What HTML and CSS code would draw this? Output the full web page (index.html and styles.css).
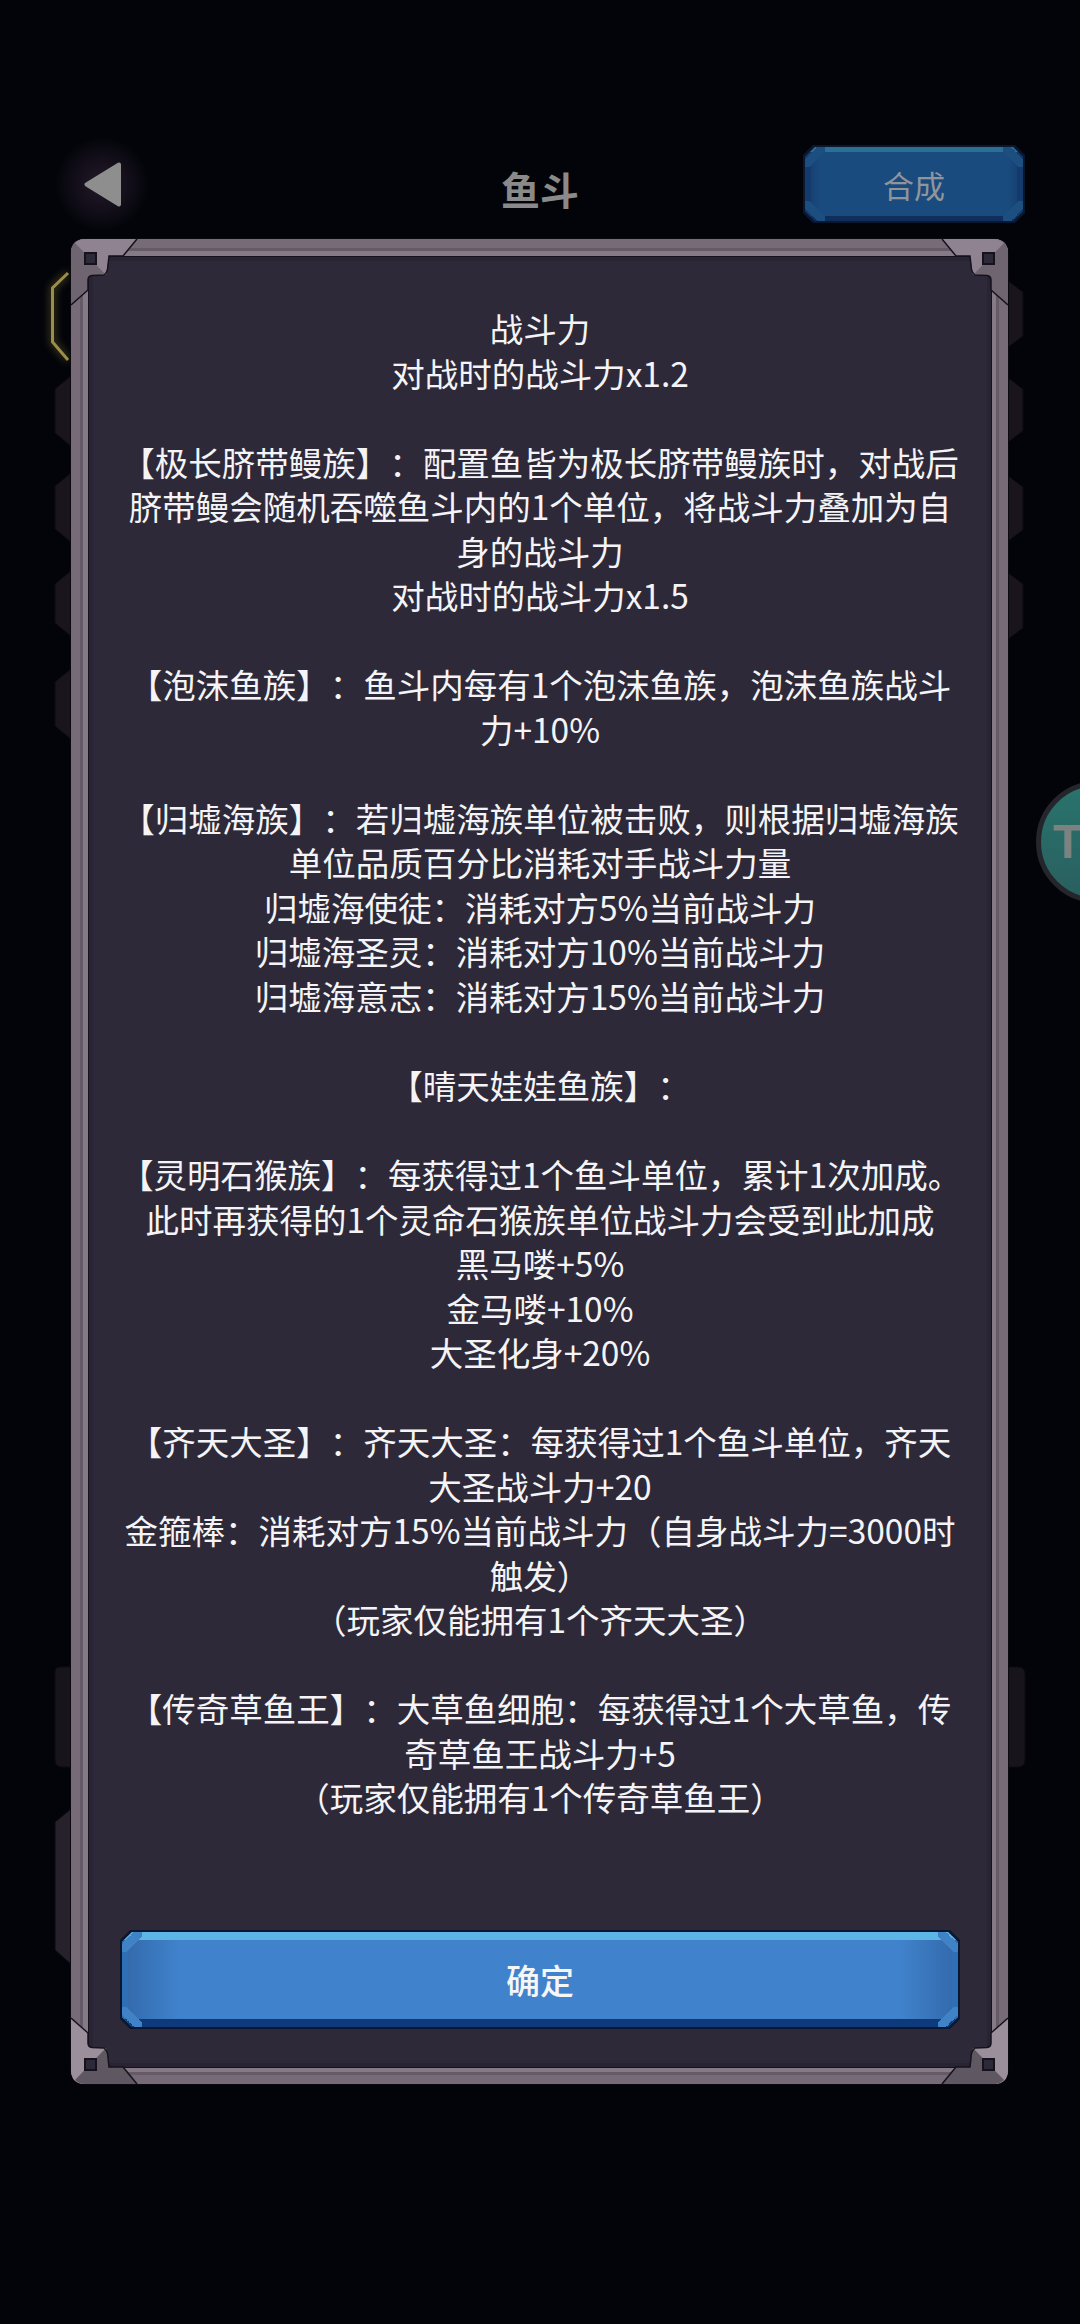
FILE: index.html
```html
<!DOCTYPE html>
<html lang="zh-CN">
<head>
    <meta charset="UTF-8">
    <meta name="viewport" content="width=device-width, initial-scale=1.0">
    <title>鱼斗</title>
    <link rel="stylesheet" href="styles.css">
</head>
<body>
<div class="page">

    <!-- tabs of the screen behind the dialog -->
    <svg class="sideTabs" viewBox="0 0 1080 2324" aria-hidden="true">
        <path class="tab" d="M72 375 L55 389 V433 L72 447 Z"/>
        <path class="tab" d="M72 472 L55 486 V529 L72 543 Z"/>
        <path class="tab" d="M72 570 L55 584 V623 L72 637 Z"/>
        <path class="tab" d="M72 668 L55 682 V726 L72 740 Z"/>
        <path class="tab" d="M1007 280 L1023 292 V336 L1007 348 Z"/>
        <path class="tab" d="M1007 377 L1023 389 V431 L1007 443 Z"/>
        <path class="tab" d="M1007 475 L1023 487 V530 L1007 542 Z"/>
        <path class="tab" d="M1007 572 L1023 584 V628 L1007 640 Z"/>
        <path class="tab tabDim" d="M72 1667 H60 Q55 1667 55 1672 V1760 Q55 1767 62 1767 H72 Z"/>
        <path class="tab tabDim" d="M1007 1667 H1018 Q1025 1667 1025 1674 V1760 Q1025 1767 1018 1767 H1007 Z"/>
        <path class="tab tabLit" d="M72 1808 L55 1822 V1950 L72 1965 Z"/>
        <path class="tabGold" d="M68 273 L52.5 288 V342 L68 360"/>
    </svg>

    <div class="sideBadge">To</div>

    <header class="topBar">
        <div class="backBtn">
            <svg class="backIcon" viewBox="0 0 37 45" aria-hidden="true">
                <path d="M35 2.500 L2.500 22.500 L35 42.500 Z"/>
            </svg>
        </div>
        <h1 class="title">鱼斗</h1>
        <div class="bevel bevelDim">
            <span class="bevelLabel">合成</span>
        </div>
    </header>

    <section class="frame">
        <svg class="corner cornerTL" viewBox="0 0 70 70" aria-hidden="true">
            <path class="plateB" d="M14 0 L66 0 L52 17 L38 17 L35 36 L20 36.500 Q17 37 17 41 V51 L0 66 V14 Q0 0 14 0 Z"/>
            <path class="plateA" d="M14 0 L66 0 L52 17 L38 17 L35 36 L4 4 Q8 0 14 0 Z"/>
            <path class="plateLine" d="M66 0 L52 17 L38 17 L37 26 Q37 33 33 36 L21 36.500 Q17 37 17 41 V51 L0 66"/>
            <rect class="plateHole" x="14" y="14" width="11" height="11"/>
        </svg>
        <svg class="corner cornerTR" viewBox="0 0 70 70" aria-hidden="true">
            <path class="plateB" d="M14 0 L66 0 L52 17 L38 17 L35 36 L20 36.500 Q17 37 17 41 V51 L0 66 V14 Q0 0 14 0 Z"/>
            <path class="plateA" d="M14 0 L66 0 L52 17 L38 17 L35 36 L4 4 Q8 0 14 0 Z"/>
            <path class="plateLine" d="M66 0 L52 17 L38 17 L37 26 Q37 33 33 36 L21 36.500 Q17 37 17 41 V51 L0 66"/>
            <rect class="plateHole" x="14" y="14" width="11" height="11"/>
        </svg>
        <svg class="corner cornerBL" viewBox="0 0 70 70" aria-hidden="true">
            <path class="plateB" d="M14 0 L66 0 L52 17 L38 17 L35 36 L20 36.500 Q17 37 17 41 V51 L0 66 V14 Q0 0 14 0 Z"/>
            <path class="plateA" d="M14 0 L66 0 L52 17 L38 17 L35 36 L4 4 Q8 0 14 0 Z"/>
            <path class="plateLine" d="M66 0 L52 17 L38 17 L37 26 Q37 33 33 36 L21 36.500 Q17 37 17 41 V51 L0 66"/>
            <rect class="plateHole" x="14" y="14" width="11" height="11"/>
        </svg>
        <svg class="corner cornerBR" viewBox="0 0 70 70" aria-hidden="true">
            <path class="plateB" d="M14 0 L66 0 L52 17 L38 17 L35 36 L20 36.500 Q17 37 17 41 V51 L0 66 V14 Q0 0 14 0 Z"/>
            <path class="plateA" d="M14 0 L66 0 L52 17 L38 17 L35 36 L4 4 Q8 0 14 0 Z"/>
            <path class="plateLine" d="M66 0 L52 17 L38 17 L37 26 Q37 33 33 36 L21 36.500 Q17 37 17 41 V51 L0 66"/>
            <rect class="plateHole" x="14" y="14" width="11" height="11"/>
        </svg>

        <div class="panel">
            <div class="rules">
                <p>战斗力<br>对战时的战斗力x1.2</p>
                <p>【极长脐带鳗族】：配置鱼皆为极长脐带鳗族时，对战后<br>脐带鳗会随机吞噬鱼斗内的1个单位，将战斗力叠加为自<br>身的战斗力<br>对战时的战斗力x1.5</p>
                <p>【泡沫鱼族】：鱼斗内每有1个泡沫鱼族，泡沫鱼族战斗<br>力+10%</p>
                <p>【归墟海族】：若归墟海族单位被击败，则根据归墟海族<br>单位品质百分比消耗对手战斗力量<br>归墟海使徒：消耗对方5%当前战斗力<br>归墟海圣灵：消耗对方10%当前战斗力<br>归墟海意志：消耗对方15%当前战斗力</p>
                <p>【晴天娃娃鱼族】：</p>
                <p>【灵明石猴族】：每获得过1个鱼斗单位，累计1次加成。<br>此时再获得的1个灵命石猴族单位战斗力会受到此加成<br>黑马喽+5%<br>金马喽+10%<br>大圣化身+20%</p>
                <p>【齐天大圣】：齐天大圣：每获得过1个鱼斗单位，齐天<br>大圣战斗力+20<br>金箍棒：消耗对方15%当前战斗力（自身战斗力=3000时<br>触发）<br>（玩家仅能拥有1个齐天大圣）</p>
                <p>【传奇草鱼王】：大草鱼细胞：每获得过1个大草鱼，传<br>奇草鱼王战斗力+5<br>（玩家仅能拥有1个传奇草鱼王）</p>
            </div>
            <div class="bevel bevelMain">
                <span class="bevelLabel">确定</span>
            </div>
        </div>
    </section>
</div>
</body>
</html>
```
FILE: styles.css
```css
html, body {
    margin: 0;
    padding: 0;
    background-color: #03040a;
}
.page {
    position: relative;
    width: 1080px;
    height: 2324px;
    overflow: hidden;
    padding-top: 145px;
    box-sizing: border-box;
    font-family: "Noto Sans CJK SC", "Noto Sans", sans-serif;
    text-spacing-trim: space-all;
}

/* decoration behind the dialog */
.sideTabs {
    position: absolute;
    top: 0;
    left: 0;
    width: 1080px;
    height: 2324px;
}
.tab {
    fill: #1a151d;
    stroke: #0c0a10;
    stroke-width: 1;
}
.tabDim {
    fill: #18141c;
}
.tabLit {
    fill: #26212b;
}
.tabGold {
    fill: none;
    stroke: #9a8f48;
    stroke-width: 3;
    filter: drop-shadow(0 0 4px rgba(170, 150, 60, 0.7));
}
.sideBadge {
    position: absolute;
    top: 781px;
    left: 1036px;
    width: 122px;
    height: 122px;
    box-sizing: border-box;
    padding-left: 12px;
    border: 5px solid #25252c;
    border-radius: 50%;
    background: linear-gradient(#2a736c, #295f5f);
    color: #7b8280;
    font-family: "Liberation Sans", sans-serif;
    font-size: 48px;
    font-weight: bold;
    line-height: 112px;
}

/* top bar */
.topBar {
    position: relative;
    display: grid;
    grid-template-columns: 1fr auto 1fr;
    grid-template-rows: 78px;
    align-items: center;
    padding: 0 55px;
}
.backBtn {
    display: flex;
    align-items: center;
    justify-content: center;
    width: 92px;
    height: 92px;
    margin-left: 1px;
    border-radius: 50%;
    background: radial-gradient(circle, rgba(62, 42, 66, 0.55) 0%, rgba(50, 34, 56, 0.3) 45%, rgba(3, 4, 10, 0) 72%);
}
.backIcon {
    width: 37px;
    height: 45px;
}
.backIcon path {
    fill: #8e8e8e;
    stroke: #8e8e8e;
    stroke-width: 4;
    stroke-linejoin: round;
}
.title {
    margin: 0;
    padding-top: 8px;
    color: #8a8a8a;
    font-size: 39px;
    font-weight: 700;
    line-height: 52px;
}

/* bevelled button, used for both 合成 and 确定 */
.bevel {
    --cut: 10px;
    position: relative;
    display: flex;
    align-items: center;
    justify-content: center;
    clip-path: polygon(var(--cut) 0, calc(100% - var(--cut)) 0, 100% var(--cut), 100% calc(100% - var(--cut)), calc(100% - var(--cut)) 100%, var(--cut) 100%, 0 calc(100% - var(--cut)), 0 var(--cut));
    background-color: #0a1730;
}
.bevel::before {
    content: "";
    position: absolute;
    top: 2px;
    right: 2px;
    bottom: 2px;
    left: 2px;
    clip-path: polygon(var(--cut) 0, calc(100% - var(--cut)) 0, 100% var(--cut), 100% calc(100% - var(--cut)), calc(100% - var(--cut)) 100%, var(--cut) 100%, 0 calc(100% - var(--cut)), 0 var(--cut));
    background:
        linear-gradient(135deg, transparent 30%, var(--facet) 30%, var(--facet) 62%, transparent 62%) left top / 20px 20px no-repeat,
        linear-gradient(225deg, transparent 30%, var(--facet) 30%, var(--facet) 62%, transparent 62%) right top / 20px 20px no-repeat,
        linear-gradient(45deg, transparent 30%, var(--facet) 30%, var(--facet) 62%, transparent 62%) left bottom / 20px 20px no-repeat,
        linear-gradient(315deg, transparent 30%, var(--facet) 30%, var(--facet) 62%, transparent 62%) right bottom / 20px 20px no-repeat,
        linear-gradient(var(--top), var(--top)) top / 100% var(--band) no-repeat,
        linear-gradient(var(--low), var(--low)) bottom / 100% var(--band) no-repeat,
        linear-gradient(var(--side), var(--side)) left / 6px 100% no-repeat,
        linear-gradient(var(--side), var(--side)) right / 6px 100% no-repeat,
        linear-gradient(90deg, var(--shade) 0, var(--face) 7%, var(--face) 93%, var(--shade) 100%);
}
.bevelLabel {
    position: relative;
}
.bevelDim {
    --top: #2b6f93;
    --low: #0f2e5c;
    --side: #143a6c;
    --facet: #1c4f80;
    --shade: #143c70;
    --face: #1a4b7e;
    --band: 5px;
    justify-self: end;
    width: 222px;
    height: 78px;
    color: #90959b;
    font-size: 31px;
}
.bevelMain {
    --top: #5db5e6;
    --low: #0e3a7c;
    --side: #2f6fb4;
    --facet: #3f82c6;
    --shade: #3268aa;
    --face: #4083cc;
    --band: 8px;
    flex: none;
    height: 99px;
    color: #f4f6f8;
    font-size: 34px;
    font-weight: 500;
}

/* dialog frame */
.frame {
    position: relative;
    width: 937px;
    height: 1845px;
    margin: 16px 0 0 71px;
    padding: 17px 16px 16px 17px;
    box-sizing: border-box;
    border-radius: 14px;
    background-color: #776b77;
    box-shadow: inset 0 0 0 9px #776b77, inset 0 0 0 12px #655b68, inset 0 0 0 17px #857a85, 0 0 0 1px #0b0910;
}
.corner {
    position: absolute;
    z-index: 2;
    width: 70px;
    height: 70px;
}
.cornerTL {
    top: 0;
    left: 0;
}
.cornerTR {
    top: 0;
    right: 0;
    transform: scaleX(-1);
}
.cornerBL {
    bottom: 0;
    left: 0;
    transform: scaleY(-1);
}
.cornerBR {
    right: 0;
    bottom: 0;
    transform: scale(-1, -1);
}
.plateA {
    fill: #8f8391;
}
.plateB {
    fill: #6f6570;
}
.cornerBL .plateA,
.cornerBR .plateA {
    fill: #5f5762;
}
.cornerBL .plateB,
.cornerBR .plateB {
    fill: #9c8f9c;
}
.plateLine {
    fill: none;
    stroke: #15121c;
    stroke-width: 1.5;
}
.plateHole {
    fill: #2d2939;
    stroke: #15121c;
    stroke-width: 2;
}
.panel {
    display: flex;
    flex-direction: column;
    height: 100%;
    box-sizing: border-box;
    padding: 49px 31px 38px;
    border: 1.5px solid #15121d;
    background-color: #2d2939;
    box-shadow: inset 0 0 0 4px rgba(24, 20, 32, 0.2);
}
.rules {
    flex: 1;
    color: #f4f4f6;
    font-size: 33.5px;
    line-height: 44.53px;
    text-align: center;
    white-space: nowrap;
}
.rules p {
    margin: 0 0 44.53px;
}
```
